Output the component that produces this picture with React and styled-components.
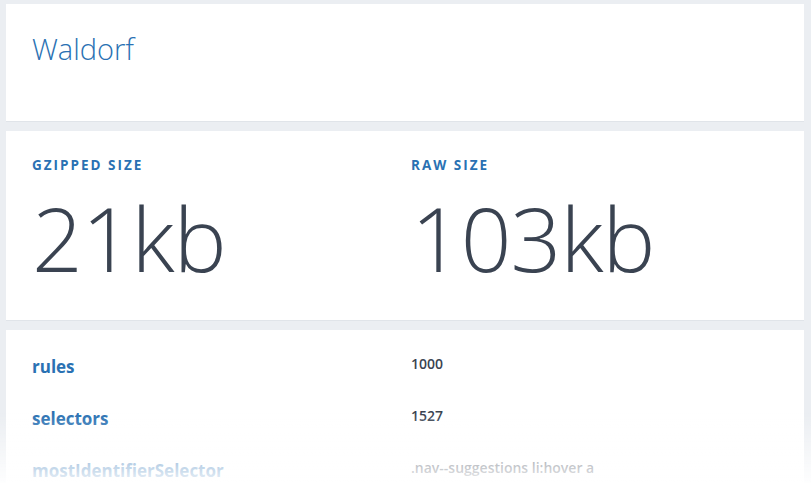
import React from "react";
import styled, { createGlobalStyle } from "styled-components";

const Global = createGlobalStyle`
  html, body { margin: 0; padding: 0; background: #ebeef2; }
  body { font-family: "Open Sans", "Noto Sans", sans-serif; overflow: hidden; }
`;

const Page = styled.div`
  display: flex;
  flex-direction: column;
  gap: 10px;
  padding: 4px 7px 0 6px;
  height: 483px;
  box-sizing: border-box;
`;

const Card = styled.section`
  background: #fff;
  box-shadow: 0 1px 0 #e0e4e9;
  padding: ${(p) => p.$pad || "26px"};
  box-sizing: border-box;
  height: ${(p) => p.$h || "auto"};
  flex-shrink: 0;
`;

const Title = styled.h1`
  margin: 0;
  font-weight: 300;
  font-size: 29px;
  line-height: 40px;
  color: #2a71b3;
`;

const Grid = styled.div`
  display: grid;
  grid-template-columns: 1fr 1fr;
  column-gap: 12px;
`;

const Label = styled.div`
  font-size: 13.5px;
  font-weight: 700;
  letter-spacing: 2px;
  text-transform: uppercase;
  color: #2a71b3;
  line-height: 16px;
`;

const Big = styled.div`
  font-size: 89px;
  font-weight: 300;
  line-height: 1;
  color: #3a4351;
  margin-top: 20px;
  letter-spacing: -1px;
`;

const Row = styled.div`
  display: grid;
  grid-template-columns: 1fr 1fr;
  column-gap: 12px;
  height: 52px;
  align-items: center;
`;

const Key = styled.div`
  font-size: 17px;
  font-weight: 700;
  color: #2a71b3;
`;

const Val = styled.div`
  font-size: 14px;
  font-weight: 600;
  color: #3a4351;
  margin-top: -6px;
`;

const Fade = styled.div`
  position: fixed;
  left: 0;
  right: 0;
  bottom: 0;
  height: 70px;
  background: linear-gradient(to bottom, rgba(255,255,255,0), rgba(255,255,255,0.92));
  pointer-events: none;
`;

const stats = [
  ["rules", "1000"],
  ["selectors", "1527"],
  ["mostIdentifierSelector", ".nav--suggestions li:hover a"],
];

export default function App() {
  return (
    <>
      <Global />
      <Page>
        <Card $h="117px" $pad="25px 26px">
          <Title>Waldorf</Title>
        </Card>
        <Card $h="189px" $pad="26px 26px">
          <Grid>
            <div>
              <Label>Gzipped size</Label>
              <Big>21kb</Big>
            </div>
            <div>
              <Label>Raw size</Label>
              <Big>103kb</Big>
            </div>
          </Grid>
        </Card>
        <Card $pad="10px 26px">
          {stats.map(([k, v]) => (
            <Row key={k}>
              <Key>{k}</Key>
              <Val>{v}</Val>
            </Row>
          ))}
        </Card>
      </Page>
      <Fade />
    </>
  );
}
